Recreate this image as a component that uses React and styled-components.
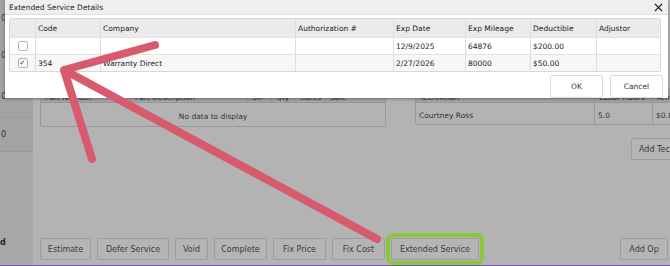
import React from 'react';
import styled, { createGlobalStyle } from 'styled-components';

const GlobalStyle = createGlobalStyle`
  html, body {
    margin: 0;
    padding: 0;
    overflow: hidden;
    background: #b3b3b3;
  }
  body {
    font-family: "DejaVu Sans", Verdana, sans-serif;
  }
`;

const Page = styled.div`
  position: relative;
  width: 670px;
  height: 265px;
  border-bottom: 1px solid #7b55c6;
  background: #b3b3b3;
  display: flex;
  overflow: hidden;
`;

const Sidebar = styled.div`
  width: 33px;
  flex-shrink: 0;
  background: #a8a8a8;
  display: flex;
  flex-direction: column;
`;

const SideCell = styled.div`
  height: ${({ h }) => h}px;
  border-bottom: 1px solid #9b9b9b;
  background: #a3a3a3;
  font-size: 8px;
  color: #333;
  display: flex;
  align-items: center;
  padding-left: 1px;
`;

const SideFoot = styled.div`
  margin-top: auto;
  height: 27px;
  font-size: 8px;
  font-weight: bold;
  color: #222;
`;

const Main = styled.div`
  flex: 1;
  display: flex;
  flex-direction: column;
  padding: 88px 2px 5px 7px;
  min-width: 0;
`;

const TablesRow = styled.div`
  display: flex;
  align-items: flex-start;
  gap: 29px;
`;

const BgTable = styled.div`
  width: ${({ w }) => w}px;
  flex-shrink: 0;
  border: 1px solid #999;
  border-radius: 2px;
  font-size: 7.5px;
  color: #333;
`;

const BgHead = styled.div`
  display: grid;
  grid-template-columns: ${({ cols }) => cols};
  height: 13px;
  background: #a4a4a4;
  border-bottom: 1px solid #999;
`;

const BgHeadCell = styled.div`
  padding: 4px 0 0 4px;
  border-right: 1px solid #999;
  white-space: nowrap;
  overflow: hidden;
  &:last-child { border-right: none; }
`;

const BgRow = styled.div`
  display: grid;
  grid-template-columns: ${({ cols }) => cols};
  height: ${({ h }) => h}px;
`;

const BgCell = styled.div`
  padding: 3px 0 0 3px;
  display: flex;
  align-items: center;
  border-right: 1px solid #999;
  white-space: nowrap;
  &:last-child { border-right: none; }
`;

const Empty = styled.div`
  height: 23px;
  padding-top: 3px;
  box-sizing: border-box;
  display: flex;
  align-items: center;
  justify-content: center;
`;

const RightTools = styled.div`
  display: flex;
  justify-content: flex-end;
  margin-top: 11px;
  margin-right: -15px;
`;

const BottomBar = styled.div`
  margin-top: auto;
  display: flex;
  gap: 6px;
  align-items: center;
`;

const Button = styled.button`
  width: ${({ w }) => w}px;
  height: 22px;
  padding: 0;
  background: #b5b5b5;
  border: 1px solid #9d9d9d;
  border-radius: 2px;
  font-family: inherit;
  font-size: 8px;
  color: #3c3c3c;
  white-space: nowrap;
  text-align: center;
  outline: ${({ highlighted }) => (highlighted ? '4px solid #8cc63f' : 'none')};
  outline-offset: 1px;
`;

const Spacer = styled.div`
  flex: 1;
`;

/* dialog */

const Dialog = styled.div`
  position: absolute;
  top: 0;
  left: 5px;
  width: 663px;
  height: 98px;
  background: #fff;
  box-shadow: 0 1px 3px rgba(0, 0, 0, 0.35);
  display: flex;
  flex-direction: column;
`;

const TitleBar = styled.div`
  height: 16px;
  background: #efefef;
  border-bottom: 1px solid #e0e0e0;
  display: flex;
  align-items: center;
  justify-content: space-between;
  padding: 0 5px 0 4px;
  font-size: 7.5px;
  color: #222;
`;

const Close = styled.svg`
  width: 9px;
  height: 9px;
`;

const Grid = styled.div`
  margin: 3px 7px 0 4px;
  border: 1px solid #d8d8d8;
  border-radius: 2px;
  font-size: 7.5px;
  color: #222;
`;

const COLS = '26px 65px 195px 98px 72px 65px 66px 1fr';

const GridRow = styled.div`
  display: grid;
  grid-template-columns: ${COLS};
  height: ${({ head }) => (head ? 18 : 16)}px;
  background: ${({ bg }) => bg};
  border-bottom: 1px solid #e2e2e2;
  &:last-child { border-bottom: none; }
`;

const GridCell = styled.div`
  display: flex;
  align-items: center;
  padding-left: 2px;
  border-right: 1px solid #dedede;
  white-space: nowrap;
  overflow: hidden;
  justify-content: ${({ center }) => (center ? 'center' : 'flex-start')};
  &:last-child { border-right: none; }
`;

const Check = styled.span`
  width: 8px;
  height: 8px;
  border: 1px solid #b5b5b5;
  border-radius: 2px;
  display: flex;
  align-items: center;
  justify-content: center;
  font-size: 7px;
  line-height: 1;
  color: #333;
  margin-left: -2px;
`;

const Actions = styled.div`
  display: flex;
  justify-content: flex-end;
  gap: 7px;
  padding: 3px 5px 0 0;
`;

const DialogButton = styled.button`
  width: 53px;
  height: 23px;
  background: #fff;
  border: 1px solid #dcdcdc;
  border-radius: 2px;
  font-family: inherit;
  font-size: 7.5px;
  color: #333;
`;

const Arrow = styled.svg`
  position: absolute;
  left: 0;
  top: 0;
  width: 670px;
  height: 266px;
  pointer-events: none;
`;

const rows = [
  { checked: false, code: '', company: '', date: '12/9/2025', miles: '64876', ded: '$200.00', bg: '#fff' },
  { checked: true, code: '354', company: 'Warranty Direct', date: '2/27/2026', miles: '80000', ded: '$50.00', bg: '#f7f7f7' },
];

const actions = [
  { label: 'Estimate', w: 51 },
  { label: 'Defer Service', w: 72 },
  { label: 'Void', w: 33 },
  { label: 'Complete', w: 53 },
  { label: 'Fix Price', w: 53 },
  { label: 'Fix Cost', w: 53 },
  { label: 'Extended Service', w: 88, highlighted: true },
];

const PARTS_COLS = '90px 117px 24px 24px 30px 1fr';
const TECH_COLS = '179px 58px 1fr';

export default function App() {
  return (
    <>
      <GlobalStyle />
      <Page>
        <Sidebar>
          <SideCell h={36}>0</SideCell>
          <SideCell h={37}>0</SideCell>
          <SideCell h={42}>0</SideCell>
          <SideCell h={33}>0</SideCell>
          <SideFoot>d</SideFoot>
        </Sidebar>
        <Main>
          <TablesRow>
            <BgTable w={344}>
              <BgHead cols={PARTS_COLS}>
                <BgHeadCell>Part Number</BgHeadCell>
                <BgHeadCell>Part Description</BgHeadCell>
                <BgHeadCell>SO</BgHeadCell>
                <BgHeadCell>Qty</BgHeadCell>
                <BgHeadCell>Cores</BgHeadCell>
                <BgHeadCell>Sale</BgHeadCell>
              </BgHead>
              <Empty>No data to display</Empty>
            </BgTable>
            <BgTable w={270}>
              <BgHead cols={TECH_COLS}>
                <BgHeadCell>Technician</BgHeadCell>
                <BgHeadCell>Labor Hours</BgHeadCell>
                <BgHeadCell>Amount</BgHeadCell>
              </BgHead>
              <BgRow cols={TECH_COLS} h={21}>
                <BgCell>Courtney Ross</BgCell>
                <BgCell>5.0</BgCell>
                <BgCell>$0.00</BgCell>
              </BgRow>
            </BgTable>
          </TablesRow>
          <RightTools>
            <Button w={52}>Add Tech</Button>
          </RightTools>
          <BottomBar>
            {actions.map((a) => (
              <Button key={a.label} w={a.w} highlighted={a.highlighted}>
                {a.label}
              </Button>
            ))}
            <Spacer />
            <Button w={48}>Add Op</Button>
          </BottomBar>
        </Main>

        <Dialog>
          <TitleBar>
            <span>Extended Service Details</span>
            <Close viewBox="0 0 10 10">
              <path d="M1 1 L9 9 M9 1 L1 9" stroke="#111" strokeWidth="1.3" />
            </Close>
          </TitleBar>
          <Grid>
            <GridRow head bg="#ebebeb">
              <GridCell />
              <GridCell>Code</GridCell>
              <GridCell>Company</GridCell>
              <GridCell>Authorization #</GridCell>
              <GridCell>Exp Date</GridCell>
              <GridCell>Exp Mileage</GridCell>
              <GridCell>Deductible</GridCell>
              <GridCell>Adjustor</GridCell>
            </GridRow>
            {rows.map((r, i) => (
              <GridRow key={i} bg={r.bg}>
                <GridCell center>
                  <Check>{r.checked ? '✓' : ''}</Check>
                </GridCell>
                <GridCell>{r.code}</GridCell>
                <GridCell>{r.company}</GridCell>
                <GridCell />
                <GridCell>{r.date}</GridCell>
                <GridCell>{r.miles}</GridCell>
                <GridCell>{r.ded}</GridCell>
                <GridCell />
              </GridRow>
            ))}
          </Grid>
          <Actions>
            <DialogButton>OK</DialogButton>
            <DialogButton>Cancel</DialogButton>
          </Actions>
        </Dialog>

        <Arrow viewBox="0 0 670 266">
          <g stroke="#d75a6d" strokeWidth="8" strokeLinecap="round" strokeLinejoin="round" fill="none">
            <path d="M377 239 L66 71" />
            <path d="M155 45 L64 70 L92 159" />
          </g>
        </Arrow>
      </Page>
    </>
  );
}
